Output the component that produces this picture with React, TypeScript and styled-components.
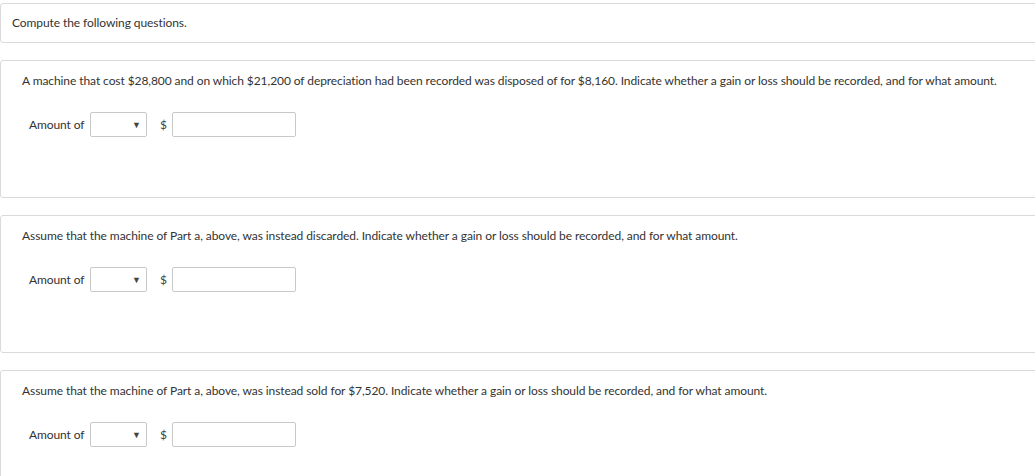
import React from "react";
import styled, { createGlobalStyle } from "styled-components";

const Global = createGlobalStyle`
  html, body { margin: 0; padding: 0; background: #ffffff; overflow: hidden; }
  body { font-family: Lato, "Open Sans", sans-serif; color: #333333; }
`;

const Page = styled.div`
  padding-top: 3px;
  margin-right: -6px;
  display: flex;
  flex-direction: column;
  gap: 17px;
`;

const Card = styled.section<{ $tall?: boolean }>`
  border: 1px solid #dadada;
  border-radius: 3px;
  background: #fff;
  padding: ${(p) => (p.$tall ? "12px 21px 60px 21px" : "11px 11px 11px 11px")};
`;

const Text = styled.p`
  margin: 0;
  font-size: 12px;
  line-height: 16px;
  letter-spacing: -0.08px;
`;

const Row = styled.div`
  margin-top: 23px;
  padding-left: 7px;
  display: flex;
  align-items: center;
  height: 25px;
`;

const Label = styled.span`
  font-size: 12px;
  letter-spacing: -0.1px;
  width: 61px;
`;

const Select = styled.div`
  width: 50px;
  height: 23px;
  border: 1px solid #c9c9c9;
  border-radius: 2px;
  display: flex;
  align-items: center;
  justify-content: flex-end;
  padding-right: 5px;
  box-sizing: content-box;
  font-size: 9px;
  color: #444;
`;

const Dollar = styled.span`
  font-size: 12px;
  margin: 0 5px 0 13px;
  color: #444;
`;

const Input = styled.div`
  width: 122px;
  height: 23px;
  border: 1px solid #c9c9c9;
  border-radius: 2px;
`;

const AnswerRow = () => (
  <Row>
    <Label>Amount of</Label>
    <Select>▼</Select>
    <Dollar>$</Dollar>
    <Input />
  </Row>
);

const questions = [
  "A machine that cost $28,800 and on which $21,200 of depreciation had been recorded was disposed of for $8,160. Indicate whether a gain or loss should be recorded, and for what amount.",
  "Assume that the machine of Part a, above, was instead discarded. Indicate whether a gain or loss should be recorded, and for what amount.",
  "Assume that the machine of Part a, above, was instead sold for $7,520. Indicate whether a gain or loss should be recorded, and for what amount.",
];

export default function App() {
  return (
    <>
      <Global />
      <Page>
        <Card>
          <Text>Compute the following questions.</Text>
        </Card>
        {questions.map((q) => (
          <Card $tall key={q}>
            <Text>{q}</Text>
            <AnswerRow />
          </Card>
        ))}
      </Page>
    </>
  );
}
